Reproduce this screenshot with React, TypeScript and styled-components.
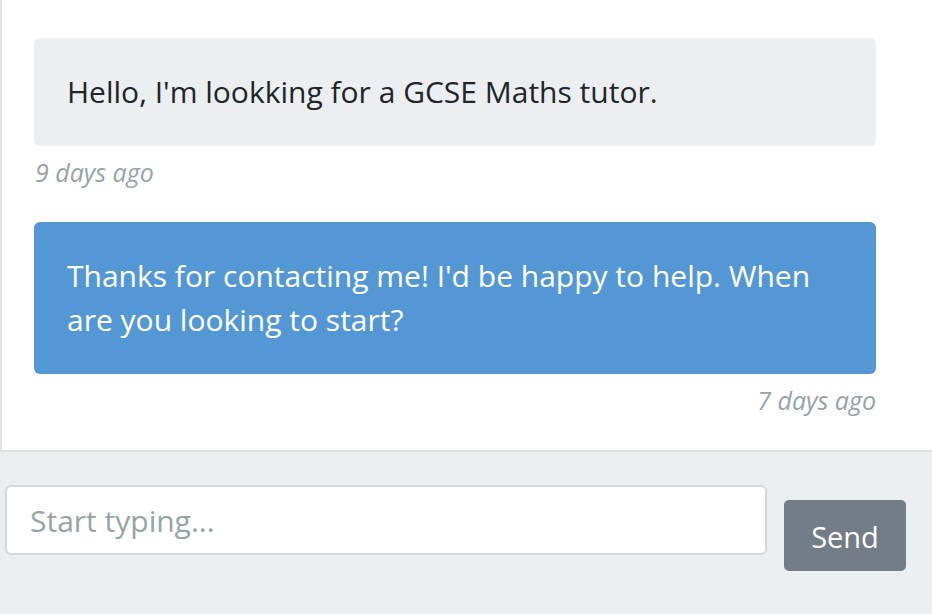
import React from "react";
import styled, { createGlobalStyle } from "styled-components";

const Global = createGlobalStyle`
  html, body { margin: 0; padding: 0; }
  body { font-family: "Open Sans", "Noto Sans", sans-serif; background: #eceff1; }
`;

const Page = styled.div`
  width: 932px;
  height: 614px;
  background: #eceff1;
  display: flex;
  flex-direction: column;
  overflow: hidden;
`;

const Messages = styled.div`
  box-sizing: border-box;
  height: 452px;
  background: #ffffff;
  border-left: 2px solid #e2e5e7;
  border-bottom: 2px solid #dde1e4;
  padding: 38px 56px 0 32px;
  display: flex;
  flex-direction: column;
`;

const Message = styled.div<{ $mine?: boolean }>`
  display: flex;
  flex-direction: column;
  align-items: ${(p) => (p.$mine ? "flex-end" : "flex-start")};
  margin-bottom: 35px;
`;

const Bubble = styled.div<{ $mine?: boolean }>`
  box-sizing: border-box;
  width: 100%;
  padding: 32px 33px;
  border-radius: 6px;
  font-size: 30px;
  line-height: 44px;
  background: ${(p) => (p.$mine ? "#5398d4" : "#eceff1")};
  color: ${(p) => (p.$mine ? "#ffffff" : "#212529")};
`;

const Time = styled.div`
  margin-top: 11px;
  padding-left: 1px;
  font-size: 25px;
  line-height: 30px;
  font-style: italic;
  color: #95a5a6;
`;

const Composer = styled.form`
  display: flex;
  align-items: flex-start;
  gap: 17px;
  padding: 33px 26px 0 5px;
`;

const Input = styled.input`
  box-sizing: border-box;
  width: 762px;
  height: 70px;
  border: 2px solid #d3d8db;
  border-radius: 6px;
  background: #ffffff;
  padding: 0 23px;
  font-family: "Open Sans", "Noto Sans", sans-serif;
  font-size: 30px;
  color: #212529;
  outline: none;
  &::placeholder { color: #95a5a6; }
`;

const SendButton = styled.button`
  box-sizing: border-box;
  margin-top: 15px;
  width: 122px;
  height: 71px;
  border: none;
  border-radius: 5px;
  background: #737d87;
  color: #ffffff;
  font-family: "Open Sans", "Noto Sans", sans-serif;
  font-size: 29px;
  padding: 2px 0 0;
`;

export default function App() {
  return (
    <>
      <Global />
      <Page>
        <Messages>
          <Message>
            <Bubble>Hello, I'm lookking for a GCSE Maths tutor.</Bubble>
            <Time>9 days ago</Time>
          </Message>
          <Message $mine>
            <Bubble $mine>
              Thanks for contacting me! I'd be happy to help. When are you looking to start?
            </Bubble>
            <Time>7 days ago</Time>
          </Message>
        </Messages>
        <Composer onSubmit={(e) => e.preventDefault()}>
          <Input placeholder="Start typing..." />
          <SendButton type="submit">Send</SendButton>
        </Composer>
      </Page>
    </>
  );
}
